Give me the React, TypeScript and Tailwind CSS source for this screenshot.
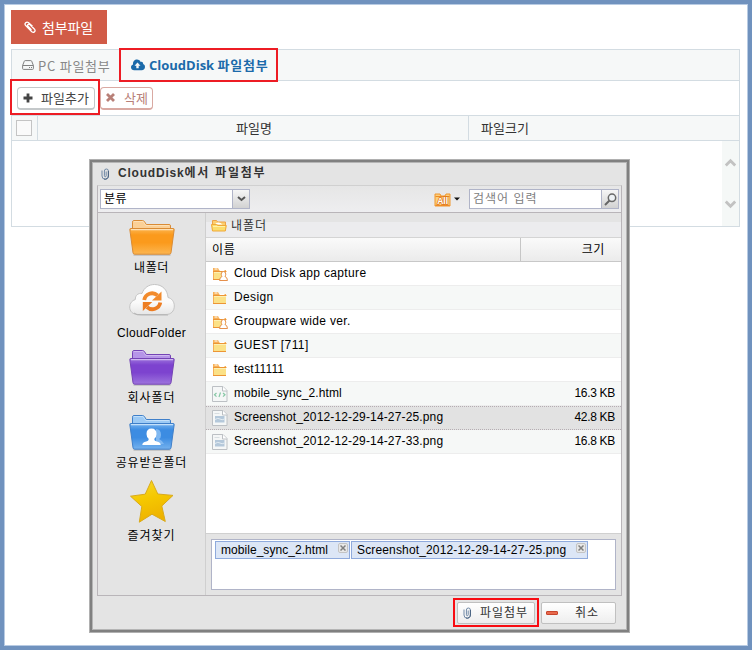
import React from "react";

const malgun = "font-['Noto_Sans_CJK_KR',sans-serif]";
const gulim = "font-['Liberation_Sans','Noto_Sans_CJK_KR',sans-serif]";

function Clip({ className = "" }: { className?: string }) {
  return (
    <svg className={className} width="9" height="12" viewBox="0 0 9 12" fill="none">
      <path d="M1 2.500v5.500a3.200 3.200 0 0 0 6.400 0V3a2 2 0 0 0-4 0v4.800a.9.900 0 0 0 1.800 0V3.500" stroke="#7089a6" strokeWidth="1" />
      <path d="M7.400 3v5a3.200 3.200 0 0 1-4.400 3" stroke="#48617f" strokeWidth="1" />
    </svg>
  );
}

type Tone = { back: string; edge: string; a: string; b: string; tab: string };
const tones: Record<string, Tone> = {
  orange: { back: "#fbd096", edge: "#d98b35", a: "#fb9a1c", b: "#fcb651", tab: "#fde0b5" },
  purple: { back: "#b695e8", edge: "#7443b5", a: "#7d43cf", b: "#9d74dd", tab: "#cfb8f0" },
  blue: { back: "#9ccaf5", edge: "#3f7fc9", a: "#3c8ce2", b: "#75b2ee", tab: "#c3e0fa" },
};

function BigFolder({ tone, person }: { tone: string; person?: boolean }) {
  const t = tones[tone];
  return (
    <svg width="46" height="37" viewBox="0 0 46 37">
      <defs>
        <linearGradient id={"g" + tone} x1="0" y1="0" x2="0" y2="1">
          <stop offset="0" stopColor={t.b} />
          <stop offset="0.25" stopColor={t.a} />
          <stop offset="0.55" stopColor={t.a} />
          <stop offset="1" stopColor={t.b} />
        </linearGradient>
      </defs>
      <path d="M4.500 36h37" stroke="#bdbdbd" strokeWidth="1.500" fill="none" />
      <path d="M3.500 12V3.200Q3.500 1.500 5 1.500h8.500q1.300 0 2 1.200L17.300 5.500H40q1.500 0 1.500 1.500v5z" fill={t.back} stroke={t.edge} />
      <path d="M4.500 2.500h9.500l2.800 4H40.500" fill="none" stroke={t.tab} />
      <path d="M1.700 9.500H44.300q1 0 .9 1L42 33.700q-.2 1.500-1.700 1.500H5.700q-1.500 0-1.700-1.500L.8 10.500q-.1-1 .9-1z" fill={"url(#g" + tone + ")"} stroke={t.edge} />
      <path d="M2 10.700h42" stroke={t.tab} strokeWidth="1.200" />
      {person && (
        <g>
          <path d="M27 15q5 0 5 6 0 3-2 4 4 2 5 5H27z" fill="#80b8f1" />
          <path d="M22.500 14.500q5 0 5 5.500 0 3.200-2.300 5 .1 2 2.500 2.500 4 .8 4 3.500H13.300q0-2.700 4-3.500 2.300-.5 2.500-2.500-2.300-1.800-2.300-5 0-5.500 5-5.500z" fill="#fff" />
        </g>
      )}
    </svg>
  );
}

function CloudSync() {
  return (
    <svg width="46" height="34" viewBox="0 0 46 34">
      <defs>
        <linearGradient id="cloud" x1="0" y1="0" x2="0" y2="1">
          <stop offset="0" stopColor="#fff" />
          <stop offset="0.600" stopColor="#fafafa" />
          <stop offset="1" stopColor="#e6e6e6" />
        </linearGradient>
      </defs>
      <path d="M9 31.500C3.500 31.500.7 28.200.7 24c0-3.800 2.400-6.500 5.600-7.500-.1-4.400 3-6.600 6.700-6C15 4.500 20 1.500 25.500 1.500c8 0 13 5.500 13.500 13 3.500.8 6.300 3.800 6.300 8.500 0 5.200-3.300 8.500-8.300 8.500z" fill="url(#cloud)" stroke="#c4c4c4" />
      <path d="M5 30q3 2.500 8 2h26" stroke="#aaa" strokeWidth=".8" fill="none" />
      <path d="M15.200 17a8 8 0 0 1 13.300-4.600" fill="none" stroke="#f28b2d" strokeWidth="3.800" />
      <path d="M32.500 8.500v9h-9.500z" fill="#f28b2d" />
      <path d="M31.300 19.500a8 8 0 0 1-13.300 4.600" fill="none" stroke="#ed7d22" strokeWidth="3.800" />
      <path d="M13.800 28v-9h9.500z" fill="#ed7d22" />
    </svg>
  );
}

function BigStar() {
  return (
    <svg width="46" height="44" viewBox="0 0 46 44">
      <defs>
        <linearGradient id="star" x1="0" y1="0" x2="0.300" y2="1">
          <stop offset="0" stopColor="#f6d92f" />
          <stop offset="0.500" stopColor="#f5c800" />
          <stop offset="1" stopColor="#eeb200" />
        </linearGradient>
      </defs>
      <path d="M22.500 1.500l6.300 13.500 15.200 1.400-11.200 10.600 3.500 15.500-13.300-7.300-12.700 8 2.500-15.700L1.500 17.200l14.700-2z" fill="url(#star)" stroke="#d9aa1c" strokeLinejoin="round" />
    </svg>
  );
}

function SmallFolder({ person }: { person?: boolean }) {
  return (
    <svg className="shrink-0" width="16" height="14" viewBox="0 0 16 14">
      <path d="M1 13V1h5l1 2h7v10z" fill="#f7b057" />
      <path d="M2.500 2h3M7.500 3.500h5" stroke="#fff" />
      <path d="M2 5h12v7H2z" fill="#fbe187" />
      <path d="M2 5.500h12" stroke="#fdf0b4" />
      <path d="M1 4.500h13.500M1 12.500h13" stroke="#ec9535" />
      {person && (
        <path d="M11.500 4.500q2.300 0 2.300 2.700 0 1.300-.9 2.200 2.400.8 2.600 4.100h-8q.2-3.300 2.600-4.100-.9-.9-.9-2.200 0-2.700 2.300-2.700z" fill="#fff" stroke="#e5904c" />
      )}
    </svg>
  );
}

function OpenFolder() {
  return (
    <svg width="16" height="13" viewBox="0 0 16 13">
      <path d="M1.500 11V1.500h4l1.200 1.500h7.800V11z" fill="#fbcf70" stroke="#eea347" />
      <path d="M3.500 5.500q4-4 8 0z" fill="#fff" />
      <path d="M.5 5.500h5l1.500 1h8.300l-1 5.500H1.500z" fill="#fbdd6d" stroke="#f0a838" />
      <path d="M2 7.500h12" stroke="#fff1a8" />
    </svg>
  );
}

function FileIcon({ html }: { html?: boolean }) {
  return (
    <svg className="shrink-0" width="16" height="16" viewBox="0 0 16 16">
      <path d="M.5.500h10.500l4 4V15.500H.5z" fill="#f5f7f7" stroke="#bcc0c4" />
      <path d="M10.500.500v4.500h4.500" fill="#fff" stroke="#bcc0c4" />
      {html ? (
        <path d="M4.500 7l-2 1.800 2 1.800M11 7l2 1.800-2 1.800M8.500 6.500l-1.500 4.500" fill="none" stroke="#86c7a5" strokeWidth="1.200" />
      ) : (
        <g>
          <path d="M3 6h9.500v6.500H3z" fill="#b4c8da" />
          <path d="M3 9.500q3-2 5-.5t4.500 0" stroke="#e4edf3" fill="none" />
          <path d="M2.500 3.500h5" stroke="#d8dee1" />
        </g>
      )}
    </svg>
  );
}

function TagClose() {
  return (
    <span className="-mt-1 mr-[1px] flex h-[10px] w-[10px] shrink-0 items-center justify-center rounded-[2px] border border-[#c3c3c3] bg-[#e8e8e8]">
      <svg width="6" height="6" viewBox="0 0 6 6"><path d="M.5.500l5 5M5.500.500l-5 5" stroke="#808080" strokeWidth="1.500" /></svg>
    </span>
  );
}

const rows = [
  { n: "Cloud Disk app capture", i: <SmallFolder person />, t: "tracking-[0.35px]" },
  { n: "Design", i: <SmallFolder />, t: "tracking-[0.35px]" },
  { n: "Groupware wide ver.", i: <SmallFolder person />, t: "tracking-[0.35px]" },
  { n: "GUEST [711]", i: <SmallFolder />, t: "tracking-[0.4px]" },
  { n: "test11111", i: <SmallFolder />, t: "tracking-[0.1px]" },
  { n: "mobile_sync_2.html", i: <FileIcon html />, s: "16.3 KB", t: "tracking-[0.1px]" },
  { n: "Screenshot_2012-12-29-14-27-25.png", i: <FileIcon />, s: "42.8 KB", sel: true, t: "tracking-[0.15px]" },
  { n: "Screenshot_2012-12-29-14-27-33.png", i: <FileIcon />, s: "16.8 KB", t: "tracking-[0.15px]" },
];

function SideItem({ icon, label, cls }: { icon: React.ReactNode; label: string; cls: string }) {
  return (
    <div className={"flex flex-col items-center justify-between " + cls}>
      {icon}
      <span className="h-[14px] whitespace-nowrap leading-[15px]">{label}</span>
    </div>
  );
}

function Dialog() {
  return (
    <div className={"absolute left-[89px] top-[159px] flex h-[474px] w-[541px] flex-col border border-[#b0b0b0] text-[12px] text-black " + gulim}>
      <div className="flex flex-1 flex-col border-2 border-[#808080] bg-[#e4e4e4]">
        <div className="flex flex-1 flex-col border border-[#b5b5b5] pb-[33px] pl-[4px] pr-[4px]">
          <div className="flex h-[22px] items-center pl-[4px]">
            <Clip />
            <span className="-mt-[2px] ml-[8px] whitespace-nowrap text-[12px] font-bold text-[#333]">
              <span className="tracking-[0.8px]">CloudDisk</span>
              <span className="tracking-[1.750px]">에서 파일첨부</span>
            </span>
          </div>
          <div className="flex flex-1 flex-col border border-[#b9b5b9] border-t-[#d0d0d0]">
            {/* filter and search */}
            <div className="flex h-[27px] items-center border-b border-[#b9b5b9] bg-gradient-to-b from-[#e6e6e6] to-[#eeeef0] pl-[2px] pr-[2px]">
              <div className="flex h-5 w-[150px] border border-[#b0b4c8] bg-white">
                <span className="flex-1 pl-[3px] leading-[18px] tracking-[0.5px]">분류</span>
                <span className="flex w-[17px] items-center justify-center border-l border-[#b0b4c8] bg-gradient-to-b from-[#f6f6f6] to-[#d2d2d2]">
                  <svg width="9" height="6" viewBox="0 0 9 6"><path d="M1 1l3.500 3L8 1" stroke="#555" strokeWidth="2" fill="none" /></svg>
                </span>
              </div>
              <span className="ml-auto flex items-center">
                <svg width="17" height="15" viewBox="0 0 17 15">
                  <path d="M1 14V2h5l1 2h4l1-2h4v12z" fill="#fbcf7d" stroke="#f0962c" />
                  <path d="M1.500 4.500h14M1.500 13.500h14" stroke="#f08a24" />
                  <text x="3.200" y="12" fontFamily="Liberation Sans" fontSize="8.500" fontWeight="bold" fill="#fff" stroke="#e07a1c" strokeWidth="1.600" paintOrder="stroke">All</text>
                </svg>
                <svg className="ml-[3px] mr-[9px]" width="6" height="4" viewBox="0 0 6 4"><path d="M0 .500h6L3 3.500z" fill="#111" /></svg>
              </span>
              <div className="flex h-5 w-[150px] border border-[#b0b4c8] bg-white">
                <span className="flex-1 whitespace-nowrap pl-[3px] leading-[18px] tracking-[1px] text-[#808080]">검색어 입력</span>
                <span className="flex w-[17px] items-center justify-center border-l border-[#b0b4c8] bg-gradient-to-b from-[#f6f6f6] to-[#d2d2d2]">
                  <svg width="13" height="13" viewBox="0 0 13 13" fill="none"><path d="M5.500 7.500l-4.500 4.500" stroke="#666" strokeWidth="2" /><circle cx="8" cy="4.800" r="3.700" fill="#eef2f5" stroke="#686868" strokeWidth="1.500" /></svg>
                </span>
              </div>
            </div>
            <div className="flex flex-1">
              {/* folder shortcuts */}
              <div className="w-[108px] shrink-0 border-r border-[#cfcfcf] pt-[6px]">
                <SideItem icon={<BigFolder tone="orange" />} label="내폴더" cls="h-[56px] tracking-[0.6px]" />
                <SideItem icon={<CloudSync />} label="CloudFolder" cls="mt-[8px] h-[57px] tracking-[0.35px]" />
                <SideItem icon={<BigFolder tone="purple" />} label="회사폴더" cls="mt-[9px] h-[56px] tracking-[0.9px]" />
                <SideItem icon={<BigFolder tone="blue" person />} label="공유받은폴더" cls="mt-[9px] h-[56px] tracking-[0.9px]" />
                <SideItem icon={<BigStar />} label="즐겨찾기" cls="mt-[9px] h-[64px] tracking-[0.9px]" />
              </div>
              <div className="flex min-w-0 flex-1 flex-col">
                <div className="flex h-[25px] items-center border-b border-[#d4d4d4] bg-[linear-gradient(#e4e4e4_9px,#ececee_9px)] pl-[5px] text-[#333]">
                  <OpenFolder />
                  <span className="ml-[4px] mt-[1px] tracking-[1px]">내폴더</span>
                </div>
                <div className="flex h-[24px] border-b border-[#c8c8c8] bg-gradient-to-b from-[#fafafa] to-[#ebebeb] leading-[25px]">
                  <span className="w-[315px] border-r border-[#c6c6c6] pl-[6px] tracking-[0.8px]">이름</span>
                  <span className="flex-1 pr-[16px] text-right tracking-[0.6px]">크기</span>
                </div>
                <div className="flex-1 bg-white">
                  {rows.map((r, k) => (
                    <div
                      key={r.n}
                      className={
                        "flex h-[24px] items-center border-b pl-[6px] pr-[6px] " +
                        (r.sel
                          ? "border-y border-dotted border-[#b5adb2] bg-[#e2e2e2]"
                          : k % 2
                            ? "border-[#ededed] bg-[#f6f8f7]"
                            : "border-[#ededed] bg-white")
                      }
                    >
                      {r.i}
                      <span className={"-mt-[2px] ml-[6px] whitespace-nowrap " + r.t}>{r.n}</span>
                      <span className="-mt-[2px] ml-auto tracking-[-0.3px]">{r.s}</span>
                    </div>
                  ))}
                </div>
                {/* chosen files */}
                <div className="h-[62px] border-t border-[#d0d0d0] py-[5px] pl-[5px] pr-[5px]">
                  <div className="flex h-[51px] gap-[1px] border border-[#b0b4c8] bg-white pl-[3px] pt-[1px]">
                    <div className="flex h-[18px] w-[135px] items-center justify-between whitespace-nowrap border border-[#8faadc] bg-[#dce6f6] pl-[5px]">
                      <span className="tracking-[0.05px]">mobile_sync_2.html</span><TagClose />
                    </div>
                    <div className="flex h-[18px] w-[237px] items-center justify-between whitespace-nowrap border border-[#8faadc] bg-[#dce6f6] pl-[5px]">
                      <span className="tracking-[0.15px]">Screenshot_2012-12-29-14-27-25.png</span><TagClose />
                    </div>
                  </div>
                </div>
              </div>
            </div>
          </div>
        </div>
      </div>
      <div className="absolute bottom-[5px] right-[13px] flex items-center gap-[2px] text-[#333]">
        <div className="flex h-[29px] w-[86px] items-center justify-center border-2 border-[#f80c12]">
          <div className="flex h-[22px] w-[78px] items-center rounded-[2px] border border-[#c0c0c0] bg-gradient-to-b from-white to-[#eee] pl-[5px]">
            <Clip /><span className="ml-[8px] tracking-[1px]">파일첨부</span>
          </div>
        </div>
        <div className="flex h-[22px] w-[75px] items-center rounded-[2px] border border-[#c0c0c0] bg-gradient-to-b from-white to-[#eee] pl-[4px]">
          <span className="h-[4px] w-3 rounded-[1px] border border-[#c8452d] bg-[#e8694c]" /><span className="ml-[17px] tracking-[1px]">취소</span>
        </div>
      </div>
    </div>
  );
}

export default function App() {
  return (
    <div className={"relative flex h-[650px] w-[752px] border-4 border-[#7092be] text-[13px] " + malgun}>
      <div className="flex-1 border border-[#b8cbe3] bg-white pl-[6px] pr-[7px] pt-[5px]">
        <div className="flex h-[34px] w-[96px] items-center bg-[#d15b47] pl-[12px] text-white">
          <svg width="13" height="13" viewBox="0 0 13 13" fill="none"><path d="M9.500 5.300L5.300 1.500C3.500.2 1 2.500 2.500 4.300l6.300 6.500c2 1.700 4.200-.8 2.700-2.600L6.800 3.600C5.500 2.600 4 4 5 5.300l3.500 3.600" stroke="#fff" strokeWidth="1.300" /></svg>
          <span className="ml-[6px] whitespace-nowrap text-[14px] tracking-[-0.1px]">첨부파일</span>
        </div>
        <div className="mt-[5px] h-[178px] border border-[#d3dce2]">
          <div className="flex h-[31px] items-center border-b border-[#d3dce2] bg-[#f6f8f8] pl-[10px]">
            <svg width="12" height="10" viewBox="0 0 12 10" fill="none" stroke="#808080"><path d="M.6 5.500L2.300 1.200Q2.500.6 3.200.6h5.600q.7 0 .9.600l1.700 4.300v3q0 .9-.9.900H1.500q-.9 0-.9-.9zM.6 5.500h10.800M7 7.500h1M9 7.500h1" /></svg>
            <span className="ml-[4px] mt-[1px] w-[73px] whitespace-nowrap text-[13px] tracking-[0.75px] text-[#888]">PC 파일첨부</span>
            <svg className="ml-[20px]" width="14" height="12" viewBox="0 0 14 12"><path d="M3.200 11.300C1.400 11.300 0 10 0 8.200 0 6.800.8 5.900 2 5.400 1.700 2.500 3.700.6 6 .6c1.800 0 3 .9 3.600 2.300 1.500-.6 2.900.6 2.500 2.200 1.200.4 1.900 1.400 1.900 2.900 0 1.900-1.400 3.300-3.300 3.300z" fill="#1b6aaa" /><path d="M6.500 3.500l3 3.200H7.700v2.600H5.300V6.700H3.500z" fill="#f6f8f8" /></svg>
            <span className="ml-[4px] mt-[1px] whitespace-nowrap font-['Open_Sans','Noto_Sans_CJK_KR',sans-serif] text-[13px] font-bold text-[#1b6aaa]">CloudDisk <span className="tracking-[0.750px]">파일첨부</span></span>
          </div>
          <div className="flex h-[34px] items-center gap-[5px] pl-[5px] text-[13px]">
            <div className="flex h-[23px] w-[78px] items-center rounded-[4px] border border-b-2 border-[#c4c8ca] pl-[5px] text-[#444]">
              <svg width="10" height="10" viewBox="0 0 10 10"><path d="M5 .500v9M.500 5h9" stroke="#444" strokeWidth="2.800" /></svg>
              <span className="ml-[8px] whitespace-nowrap">파일추가</span>
            </div>
            <div className="flex h-[23px] w-[53px] items-center rounded-[4px] border border-b-2 border-[#d9a9a2] pl-[5px] text-[#b88078]">
              <svg width="9" height="9" viewBox="0 0 9 9"><path d="M1 1l7 7M8 1L1 8" stroke="#b88078" strokeWidth="2.800" /></svg>
              <span className="ml-[9px] whitespace-nowrap">삭제</span>
            </div>
          </div>
          <div className="flex h-[26px] border-y border-[#d3dce2] bg-[#f6f8f8] leading-[24px] text-[#333]">
            <div className="flex w-[26px] items-center border-r border-[#d3dce2] pl-[4px]"><span className="h-4 w-4 border border-[#c4c4c4] bg-[#fafafa]" /></div>
            <div className="w-[431px] border-r border-[#d3dce2] pl-[2px] text-center">파일명</div>
            <div className="pl-[12px]">파일크기</div>
          </div>
          <div className="flex h-[85px] justify-end">
            <div className="flex w-[17px] flex-col items-center bg-[#f5f8f7] pt-[17px]">
              <svg width="11" height="9" viewBox="0 0 11 9"><path d="M.8 7.500l4.700-4.800 4.700 4.800" fill="none" stroke="#c2c2c2" strokeWidth="2.800" /></svg>
              <svg className="mt-[33px]" width="11" height="9" viewBox="0 0 11 9"><path d="M.8 1.500l4.700 4.800 4.700-4.800" fill="none" stroke="#c2c2c2" strokeWidth="2.800" /></svg>
            </div>
          </div>
        </div>
      </div>
      {/* callout frames around the tab and the add button */}
      <div className="absolute left-[115px] top-[44px] h-[34px] w-[159px] border-2 border-[#ed1c24]" />
      <div className="absolute left-[6px] top-[75px] h-[36px] w-[90px] border-2 border-[#ed1c24]" />
      <div className="absolute -left-1 -top-1"><Dialog /></div>
    </div>
  );
}
